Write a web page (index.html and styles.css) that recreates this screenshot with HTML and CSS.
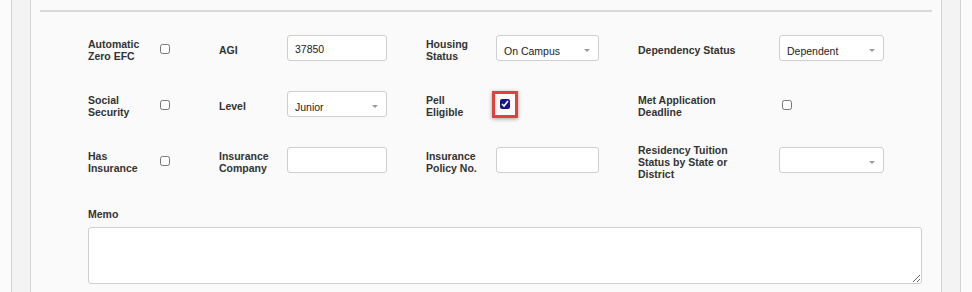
FILE: index.html
```html
<!DOCTYPE html>
<html lang="en">
<head>
    <meta charset="UTF-8">
    <meta name="viewport" content="width=device-width, initial-scale=1.0">
    <title>Financial Aid Details</title>
    <link rel="stylesheet" href="styles.css">
</head>
<body>
    <div class="page">
        <div class="frame">
            <div class="panel">
                <div class="rule"></div>
                <form class="aid-form" id="aidForm">
                    <div class="grid">
                        <!-- row 1 -->
                        <label class="lbl" for="zeroEfc">Automatic<br>Zero EFC</label>
                        <div class="ctl"><input type="checkbox" id="zeroEfc"></div>
                        <label class="lbl" for="agi">AGI</label>
                        <div class="ctl"><input type="text" class="txt" id="agi" value="37850"></div>
                        <label class="lbl" for="housing">Housing<br>Status</label>
                        <div class="ctl">
                            <span class="sel sel-mid"><select id="housing"><option>On Campus</option><option>Off Campus</option></select></span>
                        </div>
                        <label class="lbl" for="dependency">Dependency Status</label>
                        <div class="ctl">
                            <span class="sel sel-wide"><select id="dependency"><option>Dependent</option><option>Independent</option></select></span>
                        </div>

                        <!-- row 2 -->
                        <label class="lbl" for="socialSecurity">Social<br>Security</label>
                        <div class="ctl"><input type="checkbox" id="socialSecurity"></div>
                        <label class="lbl" for="level">Level</label>
                        <div class="ctl">
                            <span class="sel sel-txt"><select id="level"><option>Junior</option><option>Senior</option></select></span>
                        </div>
                        <label class="lbl" for="pell">Pell<br>Eligible</label>
                        <div class="ctl">
                            <span class="highlight"><input type="checkbox" id="pell" checked></span>
                        </div>
                        <label class="lbl" for="deadline">Met Application<br>Deadline</label>
                        <div class="ctl ctl-inset"><input type="checkbox" id="deadline"></div>

                        <!-- row 3 -->
                        <label class="lbl" for="hasInsurance">Has<br>Insurance</label>
                        <div class="ctl"><input type="checkbox" id="hasInsurance"></div>
                        <label class="lbl" for="company">Insurance<br>Company</label>
                        <div class="ctl"><input type="text" class="txt" id="company"></div>
                        <label class="lbl" for="policy">Insurance<br>Policy No.</label>
                        <div class="ctl"><input type="text" class="txt txt-mid" id="policy"></div>
                        <label class="lbl" for="residency">Residency Tuition<br>Status by State or<br>District</label>
                        <div class="ctl">
                            <span class="sel sel-wide"><select id="residency"><option></option><option>In State</option></select></span>
                        </div>
                    </div>

                    <div class="memo">
                        <label class="lbl" for="memo">Memo</label>
                        <textarea id="memo"></textarea>
                    </div>
                </form>
            </div>
        </div>
    </div>
</body>
</html>
```

FILE: styles.css
```css
/* Reset */
* {
    margin: 0;
    padding: 0;
    box-sizing: border-box;
}
body {
    font-family: "Liberation Sans", Arial, sans-serif;
    background-color: #fbfbfb;
    color: #333;
}
.page {
    display: flex;
    min-height: 100vh;
    padding: 0 11px;
}
.frame {
    flex: 1;
    display: flex;
    background-color: #f3f3f3;
    border-left: 1px solid #d4d4d4;
    border-right: 1px solid #d4d4d4;
    padding: 0 18px;
}
.panel {
    flex: 1;
    background-color: #fafafa;
    border-left: 1px solid #d4d4d4;
    border-right: 1px solid #d4d4d4;
    padding: 10px 9px 0;
}
.rule {
    height: 2px;
    background-color: #d9d9d9;
}
.aid-form {
    padding: 23px 10px 0 48px;
}
.grid {
    display: grid;
    grid-template-columns: 72px 59px 68px 139px 70px 142px 141px 105px;
    grid-auto-rows: 26px;
    row-gap: 30px;
    align-items: center;
}
.lbl {
    font-size: 10.5px;
    font-weight: bold;
    line-height: 12px;
    padding-top: 4px;
    color: #333;
}
.ctl {
    display: flex;
    align-items: center;
}
.ctl-inset {
    padding-left: 3px;
}

/* checkboxes */
input[type="checkbox"] {
    width: 10px;
    height: 10px;
    margin: 0;
    accent-color: #15158c;
}
.ctl > input[type="checkbox"] {
    margin-top: 2px;
}
.highlight {
    display: inline-flex;
    align-items: center;
    justify-content: center;
    width: 26px;
    height: 27px;
    margin-left: -4px;
    border: 3px solid #e0413f;
    box-shadow: 0 1px 4px rgba(0, 0, 0, 0.35);
}

/* text inputs */
.txt {
    width: 100px;
    height: 26px;
    padding: 1px 7px 0;
    border: 1px solid #cfcfcf;
    border-radius: 3px;
    background-color: #fff;
    font-family: inherit;
    font-size: 10.5px;
    color: #222;
}
.txt-mid {
    width: 103px;
}

/* selects */
.sel {
    position: relative;
    display: inline-block;
    width: 100px;
    height: 26px;
}
.sel-mid {
    width: 103px;
}
.sel-wide {
    width: 105px;
}
.sel select {
    -webkit-appearance: none;
    appearance: none;
    width: 100%;
    height: 100%;
    padding: 5px 20px 0 7px;
    border: 1px solid #cfcfcf;
    border-radius: 3px;
    background-color: #fff;
    font-family: inherit;
    font-size: 10.5px;
    color: #222;
}
.sel::after {
    content: "";
    position: absolute;
    right: 9px;
    top: 14px;
    border-left: 3px solid transparent;
    border-right: 3px solid transparent;
    border-top: 3px solid #9a9a9a;
    pointer-events: none;
}

/* memo */
.memo {
    margin-top: 31px;
}
.memo .lbl {
    display: block;
    margin-bottom: 7px;
}
.memo textarea {
    display: block;
    width: 834px;
    height: 57px;
    border: 1px solid #cfcfcf;
    border-radius: 3px;
    background-color: #fff;
    font-family: inherit;
    font-size: 11px;
}
```
